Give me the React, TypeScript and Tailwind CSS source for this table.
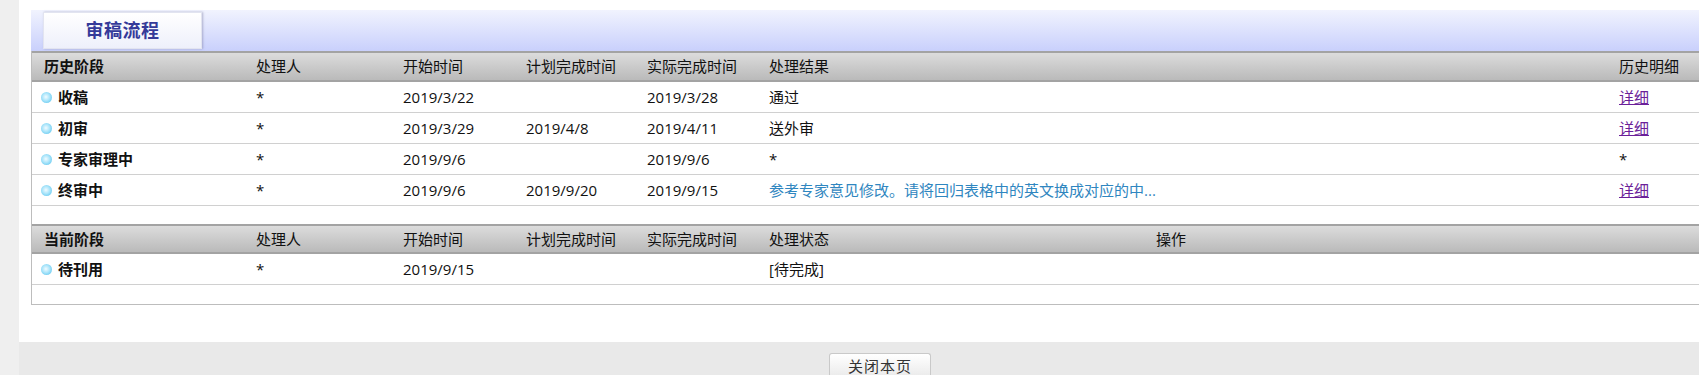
const FONT = "font-['Open_Sans','Noto_Sans_CJK_SC',sans-serif]";

const historyRows = [
  { stage: '收稿', person: '*', start: '2019/3/22', plan: '', actual: '2019/3/28', result: '通过', blue: false, detail: 'link' },
  { stage: '初审', person: '*', start: '2019/3/29', plan: '2019/4/8', actual: '2019/4/11', result: '送外审', blue: false, detail: 'link' },
  { stage: '专家审理中', person: '*', start: '2019/9/6', plan: '', actual: '2019/9/6', result: '*', blue: false, detail: 'star' },
  { stage: '终审中', person: '*', start: '2019/9/6', plan: '2019/9/20', actual: '2019/9/15', result: '参考专家意见修改。请将回归表格中的英文换成对应的中...', blue: true, detail: 'link' },
];

function Bullet() {
  return (
    <span className="inline-block h-[11px] w-[11px] shrink-0 rounded-full bg-[radial-gradient(circle_at_45%_45%,#f2fbff_0%,#a8e4fa_45%,#49bdeb_100%)]" />
  );
}

function HeaderRow({ cols, first }: { cols: string[]; first: string }) {
  return (
    <div className="grid h-[31px] grid-cols-[212px_147px_123px_121px_122px_850px_1fr] items-center border-y-2 border-[#a3a3a3] bg-gradient-to-b from-[#dcdcdc] to-[#bababa] pl-[12px] text-[15px] text-[#111]">
      <div className="font-bold">{first}</div>
      {cols.map((c, i) => (
        <div key={i}>{c}</div>
      ))}
    </div>
  );
}

export default function App() {
  return (
    <div className={`flex h-[375px] w-[1699px] overflow-hidden bg-[#efefef] ${FONT}`}>
      <div className="w-[19px] shrink-0" />
      <div className="flex w-[1720px] shrink-0 flex-col">
        <div className="h-[342px] shrink-0 bg-white pl-[12px] pt-[10px]">
          {/* tab band */}
          <div className="h-[41px] bg-gradient-to-b from-[#f1f3fe] to-[#c9d0fc] pl-[12px] pt-[2px]">
            <div className="flex h-[37px] w-[159px] items-center justify-center border border-[#e2e4f0] bg-gradient-to-b from-white to-[#eef0fb] shadow-[1px_0_2px_rgba(120,120,160,0.5)]">
              <span className="text-[18px] font-bold tracking-[0.5px] text-[#343a99]">审稿流程</span>
            </div>
          </div>

          <div className="border-b border-l border-[#bdbdbd]">
            <HeaderRow first="历史阶段" cols={['处理人', '开始时间', '计划完成时间', '实际完成时间', '处理结果', '历史明细']} />
            {historyRows.map((r) => (
              <div
                key={r.stage}
                className="grid h-[31px] grid-cols-[215px_147px_123px_121px_122px_850px_1fr] items-center border-b border-[#d0d0d0] pl-[9px] text-[15px] text-[#111]"
              >
                <div className="flex items-center gap-[6px] font-bold">
                  <Bullet />
                  <span>{r.stage}</span>
                </div>
                <div>{r.person}</div>
                <div>{r.start}</div>
                <div>{r.plan}</div>
                <div>{r.actual}</div>
                <div className={r.blue ? 'text-[#2f86c0]' : ''}>{r.result}</div>
                <div>
                  {r.detail === 'link' ? (
                    <a className="text-[#6b1f99] underline">详细</a>
                  ) : (
                    '*'
                  )}
                </div>
              </div>
            ))}
            <div className="h-[18px]" />

            <div className="grid h-[30px] grid-cols-[212px_147px_123px_121px_122px_387px_1fr] items-center border-y-2 border-[#a3a3a3] bg-gradient-to-b from-[#dcdcdc] to-[#bababa] pl-[12px] text-[15px] text-[#111]">
              <div className="font-bold">当前阶段</div>
              <div>处理人</div>
              <div>开始时间</div>
              <div>计划完成时间</div>
              <div>实际完成时间</div>
              <div>处理状态</div>
              <div>操作</div>
            </div>
            <div className="grid h-[31px] grid-cols-[215px_147px_123px_121px_122px_387px_1fr] items-center border-b border-[#d0d0d0] pl-[9px] text-[15px] text-[#111]">
              <div className="flex items-center gap-[6px] font-bold">
                <Bullet />
                <span>待刊用</span>
              </div>
              <div>*</div>
              <div>2019/9/15</div>
              <div></div>
              <div></div>
              <div>[待完成]</div>
              <div></div>
            </div>
            <div className="h-[19px]" />
          </div>
        </div>

        <div className="flex-1 bg-[#e9e9e9] pl-[810px] pt-[11px]">
          <div className="h-[22px] w-[102px] rounded-t-[3px] border border-b-0 border-[#c9c9c9] bg-gradient-to-b from-white to-[#ececec] pt-[5px] text-center text-[15px] leading-[15px] tracking-[1px] text-[#333]">
            关闭本页
          </div>
        </div>
      </div>
    </div>
  );
}
